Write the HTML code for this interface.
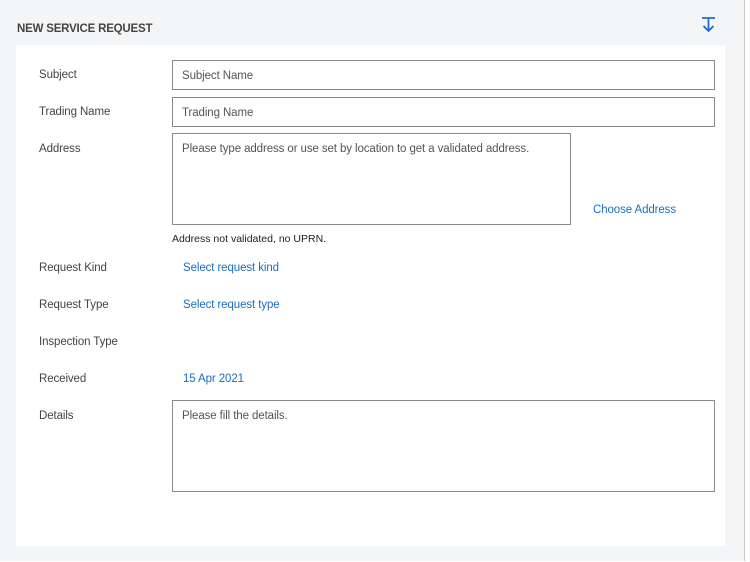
<!DOCTYPE html>
<html><head><style>
body{margin:0;width:750px;height:562px;background:#fff;font-family:"Liberation Sans",sans-serif;position:relative;overflow:hidden}
.bg{position:absolute;left:0;top:0;width:744px;height:561px;background:#f4f5f7;border-right:1px solid #c8c8c8}
.title{position:absolute;left:17px;top:23px;font-size:11.5px;font-weight:bold;color:#444;letter-spacing:-0.2px}
.panel{position:absolute;left:16px;top:45px;width:709px;height:501px;background:#fff}
.lbl{position:absolute;left:39px;font-size:11.5px;color:#444;letter-spacing:-0.1px}
.box{position:absolute;left:172px;border:1px solid #8a8a8a;box-sizing:border-box;font-size:11.5px;color:#555;padding:0 9px;background:#fff;letter-spacing:-0.1px}
.link{position:absolute;font-size:11.5px;color:#1b6ec2;letter-spacing:-0.1px}
</style></head><body>
<div class="bg"></div>
<div class="title">NEW SERVICE REQUEST</div>
<svg style="position:absolute;left:700px;top:16px" width="18" height="18" viewBox="0 0 18 18"><path d="M2 2H15M8.5 3V15M3.5 10L8.5 15L13.5 10" stroke="#1b6ec2" stroke-width="1.8" fill="none"/></svg>
<div class="panel"></div>
<div class="lbl" style="top:69px">Subject</div>
<div class="box" style="top:60px;width:543px;height:30px;line-height:30px">Subject Name</div>
<div class="lbl" style="top:106px">Trading Name</div>
<div class="box" style="top:97px;width:543px;height:30px;line-height:30px">Trading Name</div>
<div class="lbl" style="top:143px">Address</div>
<div class="box" style="top:133px;width:399px;height:92px;padding-top:9px">Please type address or use set by location to get a validated address.</div>
<div class="link" style="left:593px;top:204px">Choose Address</div>
<div style="position:absolute;left:172px;top:233px;font-size:10.5px;color:#222">Address not validated, no UPRN.</div>
<div class="lbl" style="top:262px">Request Kind</div>
<div class="link" style="left:183px;top:262px">Select request kind</div>
<div class="lbl" style="top:299px">Request Type</div>
<div class="link" style="left:183px;top:299px">Select request type</div>
<div class="lbl" style="top:336px">Inspection Type</div>
<div class="lbl" style="top:373px">Received</div>
<div class="link" style="left:183px;top:373px">15 Apr 2021</div>
<div class="lbl" style="top:410px">Details</div>
<div class="box" style="top:400px;width:543px;height:92px;padding-top:9px">Please fill the details.</div>
</body></html>
